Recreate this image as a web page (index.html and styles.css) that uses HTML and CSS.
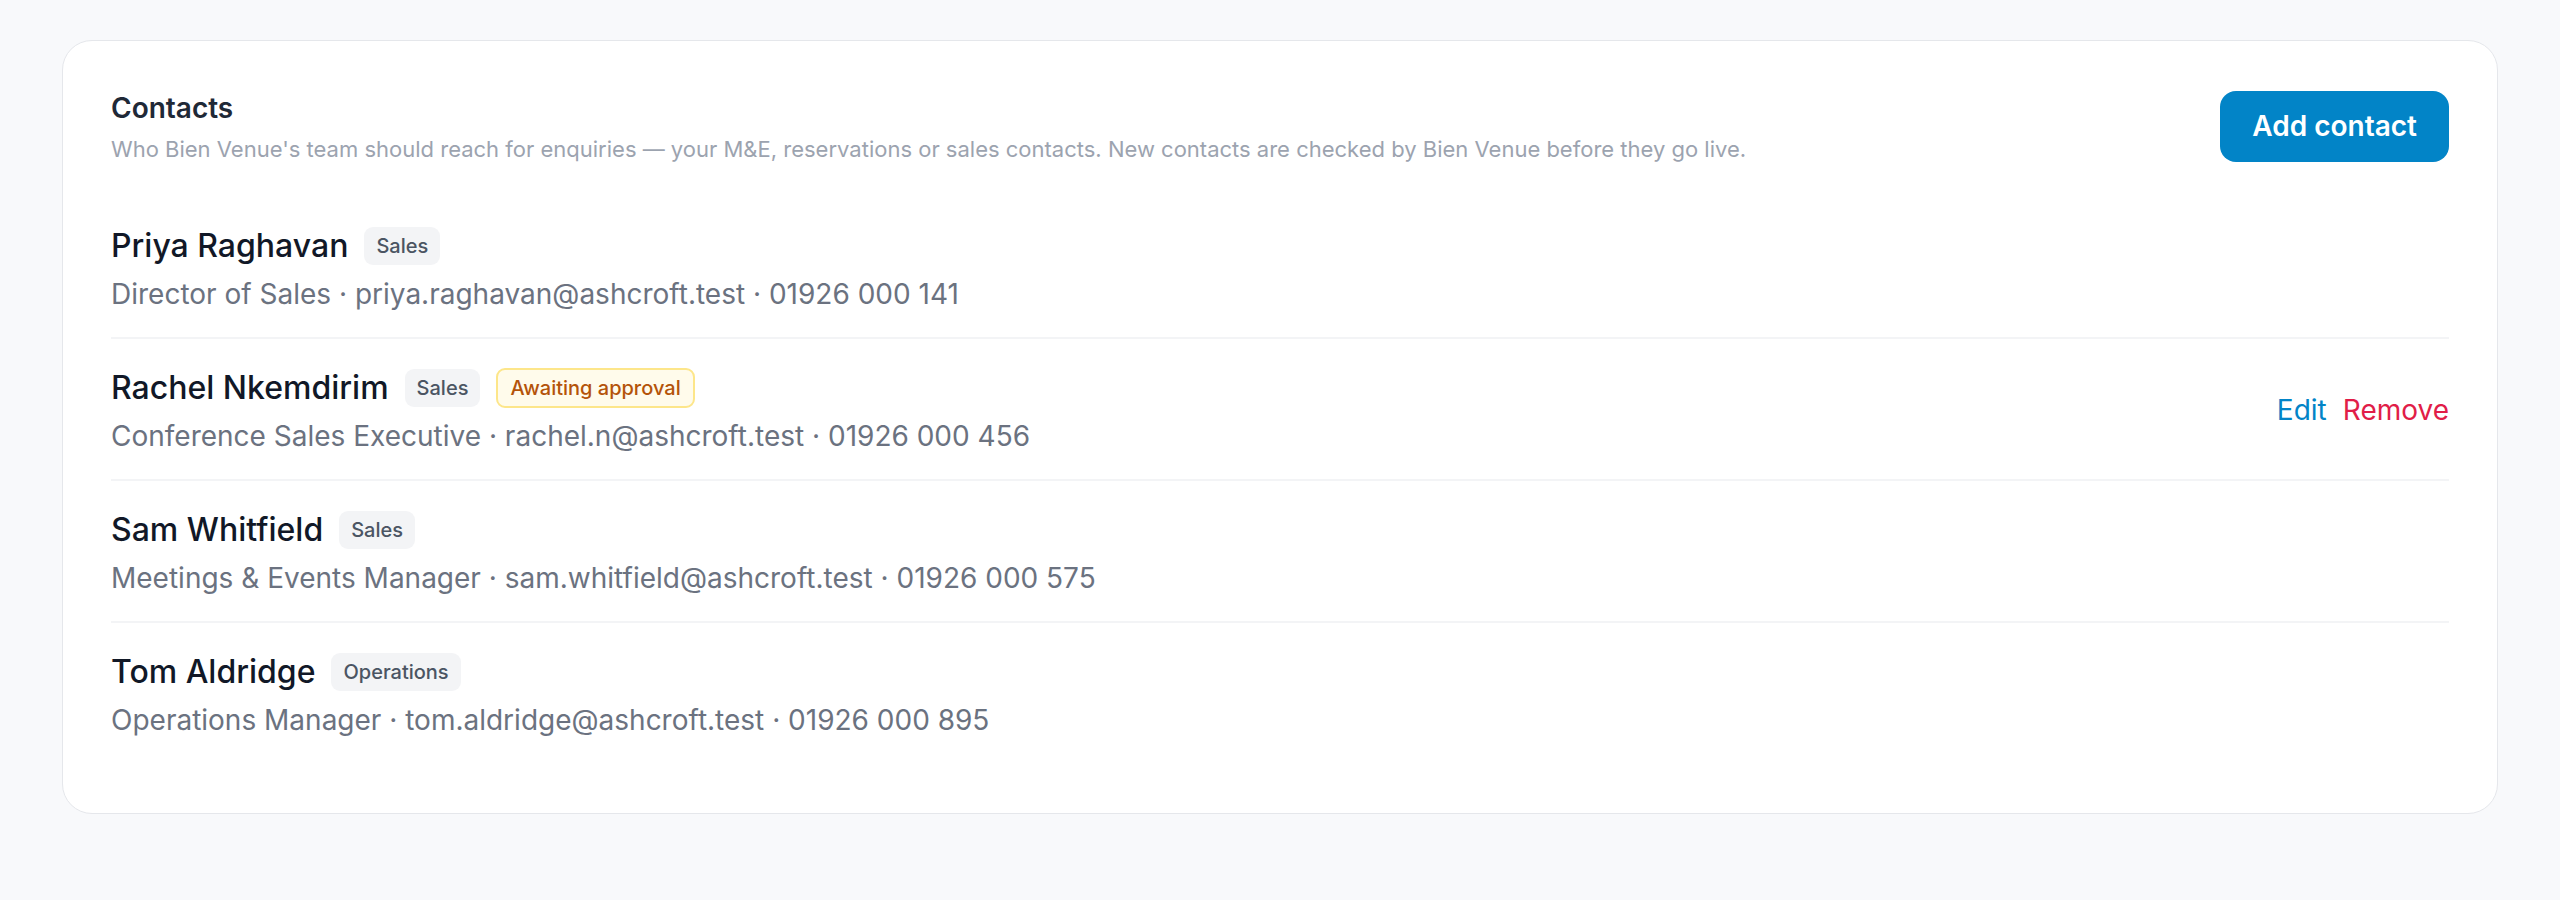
FILE: index.html
```html
<!DOCTYPE html>
<html lang="en">
<head>
<meta charset="utf-8">
<title>Contacts</title>
<link rel="stylesheet" href="styles.css">
</head>
<body>
<section class="card">
  <header class="card-header">
    <div class="heading">
      <h2 class="title">Contacts</h2>
      <p class="subtitle">Who Bien Venue's team should reach for enquiries — your M&amp;E, reservations or sales contacts. New contacts are checked by Bien Venue before they go live.</p>
    </div>
    <button class="btn-primary" type="button">Add contact</button>
  </header>
  <ul class="contact-list">
    <li class="contact">
      <div class="contact-info">
        <div class="name-line"><span class="name">Priya Raghavan</span><span class="badge">Sales</span></div>
        <div class="meta">Director of Sales · priya.raghavan@ashcroft.test · 01926 000 141</div>
      </div>
    </li>
    <li class="contact">
      <div class="contact-info">
        <div class="name-line"><span class="name">Rachel Nkemdirim</span><span class="badge">Sales</span><span class="badge badge-pending">Awaiting approval</span></div>
        <div class="meta">Conference Sales Executive · rachel.n@ashcroft.test · 01926 000 456</div>
      </div>
      <div class="actions">
        <a class="action action-edit" href="#">Edit</a>
        <a class="action action-remove" href="#">Remove</a>
      </div>
    </li>
    <li class="contact">
      <div class="contact-info">
        <div class="name-line"><span class="name">Sam Whitfield</span><span class="badge">Sales</span></div>
        <div class="meta">Meetings &amp; Events Manager · sam.whitfield@ashcroft.test · 01926 000 575</div>
      </div>
    </li>
    <li class="contact">
      <div class="contact-info">
        <div class="name-line"><span class="name">Tom Aldridge</span><span class="badge">Operations</span></div>
        <div class="meta">Operations Manager · tom.aldridge@ashcroft.test · 01926 000 895</div>
      </div>
    </li>
  </ul>
</section>
</body>
</html>
```
FILE: styles.css
```css
* { box-sizing: border-box; }
html, body { margin: 0; padding: 0; }
body {
  background: #f8f9fb;
  font-family: Inter, "Noto Sans", "Liberation Sans", sans-serif;
  padding: 40px 62px;
}
.card {
  background: #ffffff;
  border: 1px solid #e5e7eb;
  border-radius: 30px;
  padding: 47px 48px 50px;
}
.card-header {
  display: flex;
  align-items: center;
  justify-content: space-between;
  gap: 32px;
  margin-bottom: 31px;
}
.title {
  margin: 0;
  font-size: 28px;
  line-height: 40px;
  font-weight: 600;
  color: #1f2937;
}
.subtitle {
  margin: 5px 0 0;
  font-size: 22px;
  line-height: 32px;
  color: #9ca3af;
}
.btn-primary {
  flex: none;
  font-family: inherit;
  font-size: 28px;
  line-height: 39px;
  font-weight: 600;
  color: #ffffff;
  background: #0284c7;
  border: 0;
  border-radius: 16px;
  padding: 16px 32px;
}
.contact-list {
  list-style: none;
  margin: 0;
  padding: 0;
}
.contact {
  display: flex;
  align-items: center;
  justify-content: space-between;
  padding: 26px 0 24px;
  border-top: 2px solid #f3f4f6;
}
.contact:first-child { border-top: 0; padding-top: 27px; }
.name-line {
  display: flex;
  align-items: center;
  gap: 16px;
  height: 46px;
}
.name {
  font-size: 32px;
  line-height: 46px;
  font-weight: 500;
  color: #111827;
}
.badge {
  font-size: 20px;
  line-height: 30px;
  font-weight: 500;
  color: #4b5563;
  background: #f3f4f6;
  border-radius: 9px;
  padding: 4px 12px;
}
.badge-pending {
  color: #b45309;
  background: #fffbeb;
  border: 2px solid #fde68a;
  padding: 3px 12px;
}
.meta {
  margin-top: 6px;
  font-size: 28px;
  line-height: 38px;
  color: #6b7280;
}
.actions {
  display: flex;
  gap: 16px;
}
.action {
  font-size: 28px;
  line-height: 38px;
  text-decoration: none;
}
.action-edit { color: #0284c7; }
.action-remove { color: #e11d48; }
```
